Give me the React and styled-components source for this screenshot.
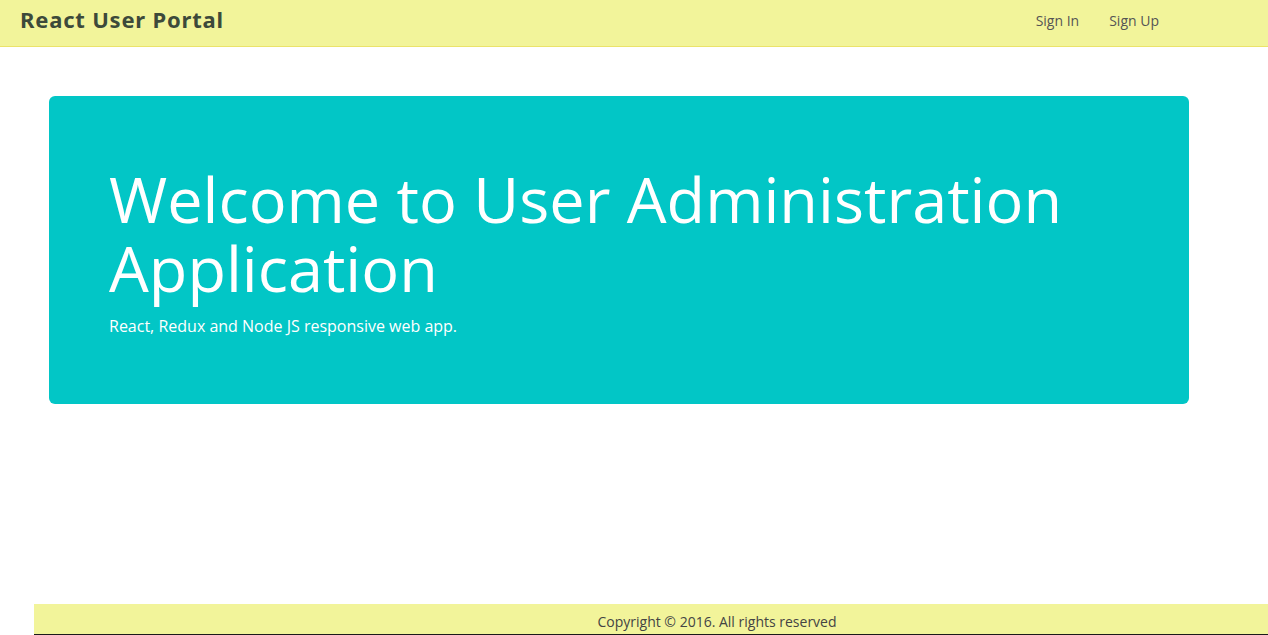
import styled, { createGlobalStyle } from "styled-components";

const GlobalStyle = createGlobalStyle`
  html, body {
    margin: 0;
    padding: 0;
    overflow: hidden;
    background: #ffffff;
  }
  body {
    font-family: "Open Sans", "Liberation Sans", sans-serif;
    font-size: 14px;
    color: #333;
  }
`;

const Page = styled.div`
  display: flex;
  flex-direction: column;
  height: 635px;
  width: 1268px;
  overflow: hidden;
`;

const Header = styled.header`
  display: flex;
  align-items: center;
  justify-content: space-between;
  height: 46px;
  background: #f2f49a;
  border-bottom: 1px solid #ebe36a;
  padding: 0 94px 0 20px;
  flex-shrink: 0;
`;

const Brand = styled.a`
  font-family: "Noto Sans", "Liberation Sans", sans-serif;
  font-weight: 700;
  font-size: 22px;
  color: #3d4a3a;
  text-decoration: none;
  letter-spacing: 0.8px;
  margin-top: -8px;
`;

const NavList = styled.nav`
  display: flex;
`;

const NavLink = styled.a`
  padding: 0 15px;
  font-size: 14px;
  color: #555;
  text-decoration: none;
  margin-top: -6px;
`;

const Jumbotron = styled.section`
  margin: 49px 0 0 49px;
  width: 1140px;
  box-sizing: border-box;
  background: #02c6c6;
  border-radius: 6px;
  padding: 68px 60px 66px;
  color: #ffffff;
`;

const Title = styled.h1`
  margin: 0 0 10px;
  font-size: 63px;
  font-weight: 400;
  line-height: 1.1;
`;

const Lead = styled.p`
  margin: 0;
  font-size: 16px;
  line-height: 1.5;
  padding-top: 1px;
`;

const Footer = styled.footer`
  margin-top: auto;
  margin-left: 34px;
  width: 1366px;
  flex-shrink: 0;
  height: 31px;
  box-sizing: border-box;
  padding-top: 4px;
  background: #f2f49a;
  border-bottom: 1px solid #1a1a1a;
  display: flex;
  align-items: center;
  justify-content: center;
  font-size: 14px;
  color: #444;
`;

const links = [
  { label: "Sign In", href: "#signin" },
  { label: "Sign Up", href: "#signup" },
];

export default function App() {
  return (
    <Page>
      <GlobalStyle />
      <Header>
        <Brand href="#">React User Portal</Brand>
        <NavList>
          {links.map(({ label, href }) => (
            <NavLink key={href} href={href}>
              {label}
            </NavLink>
          ))}
        </NavList>
      </Header>
      <Jumbotron>
        <Title>Welcome to User Administration Application</Title>
        <Lead>React, Redux and Node JS responsive web app.</Lead>
      </Jumbotron>
      <Footer>Copyright © 2016. All rights reserved</Footer>
    </Page>
  );
}
